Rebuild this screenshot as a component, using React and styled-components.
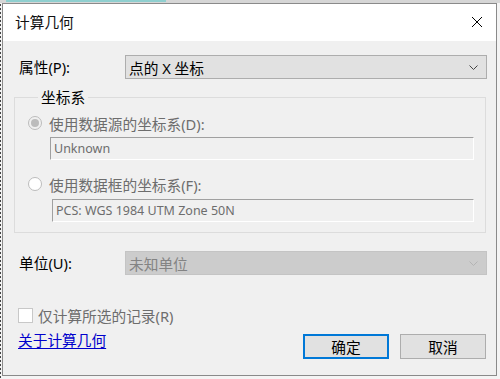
import styled, { createGlobalStyle } from 'styled-components';

const GlobalStyle = createGlobalStyle`
  html, body {
    margin: 0;
    padding: 0;
    background: #f4f4f4;
  }
  body {
    font-family: "Noto Sans", "Noto Sans CJK SC", sans-serif;
    font-size: 14.7px;
    color: #000;
  }
`;

const Backdrop = styled.div`
  width: 500px;
  height: 379px;
  box-sizing: border-box;
  padding: 3px 3px 0 2px;
  background:
    linear-gradient(#8fcfcf, #8fcfcf) 6px 0 / 160px 2px no-repeat,
    linear-gradient(#d6d6d6, #d6d6d6) 0 0 / 100% 3px no-repeat,
    repeating-linear-gradient(#444 0 2px, transparent 2px 4px) 0 0 / 1px 100% no-repeat,
    #f4f4f4;
`;

const Window = styled.div`
  width: 495px;
  height: 373px;
  box-sizing: border-box;
  border: 1px solid #8a8a8a;
  display: flex;
  flex-direction: column;
  background: #f0f0f0;
`;

const TitleBar = styled.div`
  height: 37px;
  flex: none;
  background: #fff;
  display: flex;
  align-items: center;
  justify-content: space-between;
  padding: 0 12px 0 12px;
`;

const Title = styled.span`
  font-size: 14.7px;
  color: #111;
  margin-top: -2px;
`;

const CloseButton = styled.span`
  display: flex;
  width: 10px;
  height: 10px;
  margin-right: 2px;
  margin-top: -1px;
`;

const Body = styled.div`
  flex: 1;
  display: flex;
  flex-direction: column;
  padding: 14px 10px 0 11px;
`;

const FieldRow = styled.div`
  display: grid;
  grid-template-columns: 106px 1fr;
  align-items: center;
  padding-left: 5px;
  margin-top: ${p => p.$top || 0}px;
`;

const Label = styled.span`
  line-height: 20px;
`;

const Select = styled.div`
  height: 24px;
  box-sizing: border-box;
  border: 1px solid ${p => (p.$disabled ? '#c4c4c4' : '#adadad')};
  background: ${p => (p.$disabled ? '#cccccc' : '#e1e1e1')};
  color: ${p => (p.$disabled ? '#838383' : '#000')};
  display: flex;
  align-items: center;
  justify-content: space-between;
  padding: 0 8px 0 3px;
  margin-right: -1px;
  svg {
    stroke: ${p => (p.$disabled ? '#b4b4b4' : '#444')};
  }
`;

const Group = styled.fieldset`
  margin: 8px 0 0 0;
  padding: 6px 11px 10px 13px;
  border: 1px solid #dcdcdc;
  min-width: 0;
`;

const Legend = styled.legend`
  padding: 0 3px;
  margin-left: 10px;
  line-height: 20px;
`;

const RadioRow = styled.label`
  display: flex;
  align-items: center;
  gap: 7px;
  height: 20px;
  color: #6d6d6d;
  margin-top: ${p => p.$top || 0}px;
`;

const Radio = styled.span`
  width: 14px;
  height: 14px;
  box-sizing: border-box;
  border-radius: 50%;
  border: 1px solid #bcbcbc;
  background: ${p => (p.$checked ? '#f0f0f0' : '#fff')};
  display: flex;
  align-items: center;
  justify-content: center;
  &::after {
    content: '';
    display: ${p => (p.$checked ? 'block' : 'none')};
    width: 8px;
    height: 8px;
    border-radius: 50%;
    background: #bcbcbc;
  }
`;

const TextBox = styled.div`
  height: 23px;
  box-sizing: border-box;
  margin: ${p => p.$top || 0}px 0 0 ${p => p.$left || 22}px;
  border-style: solid;
  border-width: 1px;
  border-color: #a0a0a0 #fff #fff #a0a0a0;
  color: #6d6d6d;
  font-size: 12.5px;
  display: flex;
  align-items: center;
  padding-left: 3px;
`;

const CheckRow = styled.label`
  display: flex;
  align-items: center;
  gap: 5px;
  height: 20px;
  margin-top: 30px;
  padding-left: 4px;
  color: #6d6d6d;
`;

const CheckBox = styled.span`
  width: 15px;
  height: 15px;
  box-sizing: border-box;
  border: 1px solid #c8c8c8;
  background: #fff;
`;

const Footer = styled.div`
  display: flex;
  align-items: flex-start;
  justify-content: space-between;
  margin-top: 5px;
  padding-left: 4px;
`;

const Link = styled.a`
  color: #0000cc;
  text-decoration: underline;
  text-underline-offset: 2px;
  line-height: 20px;
`;

const Buttons = styled.div`
  display: flex;
  gap: 11px;
  margin-top: 4px;
`;

const Button = styled.button`
  width: 86px;
  height: 25px;
  box-sizing: border-box;
  background: #e1e1e1;
  border: ${p => (p.$default ? '2px solid #0078d7' : '1px solid #adadad')};
  font: inherit;
  color: #000;
  padding: 0;
  display: flex;
  align-items: center;
  justify-content: center;
`;

const Chevron = () => (
  <svg width="9" height="5" viewBox="0 0 9 5" fill="none" strokeWidth="1">
    <polyline points="0.5,0.5 4.5,4.5 8.5,0.5" />
  </svg>
);

export default function App() {
  return (
    <>
      <GlobalStyle />
      <Backdrop>
        <Window>
          <TitleBar>
            <Title>计算几何</Title>
            <CloseButton>
              <svg width="10" height="10" viewBox="0 0 10 10" stroke="#000" strokeWidth="1">
                <line x1="0" y1="0" x2="10" y2="10" />
                <line x1="10" y1="0" x2="0" y2="10" />
              </svg>
            </CloseButton>
          </TitleBar>
          <Body>
            <FieldRow>
              <Label>属性(P):</Label>
              <Select>
                <span>点的 X 坐标</span>
                <Chevron />
              </Select>
            </FieldRow>

            <Group>
              <Legend>坐标系</Legend>
              <RadioRow>
                <Radio $checked />
                使用数据源的坐标系(D):
              </RadioRow>
              <TextBox $top={4} $left={22}>Unknown</TextBox>
              <RadioRow $top={14}>
                <Radio />
                使用数据框的坐标系(F):
              </RadioRow>
              <TextBox $top={5} $left={24}>PCS: WGS 1984 UTM Zone 50N</TextBox>
            </Group>

            <FieldRow $top={18}>
              <Label>单位(U):</Label>
              <Select $disabled>
                <span>未知单位</span>
                <Chevron />
              </Select>
            </FieldRow>

            <CheckRow>
              <CheckBox />
              仅计算所选的记录(R)
            </CheckRow>

            <Footer>
              <Link href="#">关于计算几何</Link>
              <Buttons>
                <Button $default>确定</Button>
                <Button>取消</Button>
              </Buttons>
            </Footer>
          </Body>
        </Window>
      </Backdrop>
    </>
  );
}
